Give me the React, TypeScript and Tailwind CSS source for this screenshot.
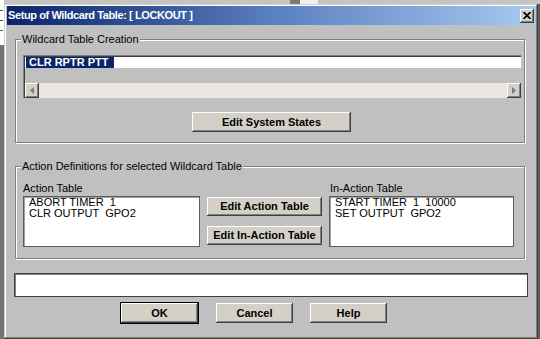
import { FC, ReactNode } from "react";

const raised = "bg-[#d4d0c8] shadow-[inset_-1px_-1px_#404040,inset_1px_1px_#ffffff,inset_-2px_-2px_#808080]";

const Btn: FC<{ label: string; className?: string; isDefault?: boolean }> = ({ label, className = "", isDefault }) => (
  <button
    className={`flex items-center justify-center ${raised} text-[11px] font-bold leading-none text-black ${
      isDefault ? "outline outline-1 outline-black" : ""
    } ${className}`}
  >
    {label}
  </button>
);

const Group: FC<{ title: string; className?: string; children: ReactNode }> = ({ title, className = "", children }) => (
  <div className={`relative border border-[#808080] shadow-[inset_1px_1px_#ffffff,1px_1px_#ffffff] ${className}`}>
    <span className="absolute -top-[8px] left-[5px] bg-[#c0c0c0] px-[1px] text-[11px] leading-[14px] text-black">
      {title}
    </span>
    {children}
  </div>
);

const ListBox: FC<{ lines: string[]; className?: string }> = ({ lines, className = "" }) => (
  <div className={`border border-[#5c5c5c] bg-white pl-[5px] shadow-[inset_1px_1px_#a0a0a0] ${className}`}>
    {lines.map((l) => (
      <div key={l} className="whitespace-pre text-[11px] leading-[11px] text-black">
        {l}
      </div>
    ))}
  </div>
);

const Arrow: FC<{ dir: "left" | "right" }> = ({ dir }) => (
  <div className={`flex w-[14px] items-center justify-center ${raised}`}>
    <svg width="4" height="7" viewBox="0 0 4 7">
      {dir === "left" ? <path d="M4 0 L0 3.5 L4 7 Z" fill="#7a7a7a" /> : <path d="M0 0 L4 3.5 L0 7 Z" fill="#7a7a7a" />}
    </svg>
  </div>
);

export default function App() {
  return (
    <div className="flex h-[339px] w-[540px] flex-col overflow-hidden bg-[#6e6e6e] font-['Liberation_Sans',Arial,sans-serif]">
      {/* strip of whatever sits behind the dialog */}
      <div className="flex h-[4px] shrink-0 bg-[#c4c4c4]">
        <div className="w-[4px] bg-white" />
        <div className="ml-[286px] w-[10px] bg-[#7a7a7a]" />
        <div className="w-[18px] bg-[#f0f0f0]" />
      </div>
      <div className="flex flex-1">
        <div className="flex w-[4px] flex-col">
          <div className="flex h-[41px] flex-col gap-[9px] bg-white pt-[6px]">
            <div className="h-[1px] w-[3px] bg-[#555]" />
            <div className="h-[1px] w-[3px] bg-[#555]" />
            <div className="h-[1px] w-[3px] bg-[#555]" />
          </div>
          <div className="flex-1 bg-[#737373]" />
        </div>

        {/* dialog window */}
        <div className="flex h-[335px] w-[534px] flex-col bg-[#c0c0c0] px-[3px] pt-[2px] shadow-[inset_-1px_-1px_#404040,inset_1px_1px_#d4d0c8,inset_-2px_-2px_#808080,inset_2px_2px_#ffffff]">
          <div className="flex h-[19px] items-center bg-linear-to-r from-[#0a246a] via-[#5a7fc0] to-[#a6caf0] pl-[1px] pr-[1px]">
            <span className="text-[11px] font-bold tracking-[-0.4px] text-white">Setup of Wildcard Table: [ LOCKOUT ]</span>
            <div className={`ml-auto flex h-[14px] w-[14px] items-center justify-center ${raised}`}>
              <svg width="8" height="7" viewBox="0 0 8 7">
                <path d="M0.5 0 L7.5 7 M7.5 0 L0.5 7" stroke="#000" strokeWidth="1.7" />
              </svg>
            </div>
          </div>

          <Group title="Wildcard Table Creation" className="ml-[8px] mt-[14px] h-[104px] w-[510px] pl-[7px] pt-[15px]">
            <div className="flex h-[43px] w-[498px] flex-col border-l border-t border-[#808080]">
              <div className="flex flex-1 flex-col border-l border-t border-[#404040]">
                <div className="flex h-[11px] bg-white">
                  <span className="ml-[1px] w-[88px] bg-[#0a246a] pl-[3px] text-[11px] font-bold leading-[11px] text-white">
                    CLR RPTR PTT
                  </span>
                </div>
                <div className="flex-1 bg-[#c0c0c0]" />
                <div className="flex h-[15px]">
                  <Arrow dir="left" />
                  <div className="flex-1 bg-[#e9e7e0]" />
                  <Arrow dir="right" />
                </div>
              </div>
            </div>
            <Btn label="Edit System States" className="ml-[169px] mt-[14px] h-[20px] w-[159px]" />
          </Group>

          <Group
            title="Action Definitions for selected Wildcard Table"
            className="ml-[8px] mt-[23px] flex h-[93px] w-[510px] items-start pl-[7px] pt-[14px]"
          >
            <div className="flex w-[177px] flex-col">
              <span className="h-[14px] text-[11px] leading-[14px] text-black">Action Table</span>
              <ListBox className="mt-[1px] h-[51px]" lines={["ABORT TIMER  1", "CLR OUTPUT  GPO2"]} />
            </div>
            <div className="ml-[7px] flex flex-col gap-[10px] pt-[16px]">
              <Btn label="Edit Action Table" className="h-[19px] w-[115px]" />
              <Btn label="Edit In-Action Table" className="h-[19px] w-[115px]" />
            </div>
            <div className="ml-[7px] flex w-[185px] flex-col">
              <span className="h-[14px] pl-[1px] text-[11px] leading-[14px] text-black">In-Action Table</span>
              <ListBox className="mt-[1px] h-[51px]" lines={["START TIMER  1  10000", "SET OUTPUT  GPO2"]} />
            </div>
          </Group>

          <div className="ml-[7px] mt-[14px] h-[24px] w-[514px] border border-[#404040] bg-white shadow-[inset_1px_1px_#808080]" />

          <div className="ml-[114px] mt-[6px] flex">
            <Btn label="OK" isDefault className="h-[20px] w-[77px]" />
            <Btn label="Cancel" className="ml-[18px] h-[20px] w-[77px]" />
            <Btn label="Help" className="ml-[17px] h-[20px] w-[77px]" />
          </div>
        </div>
        <div className="flex-1 bg-[#5e5e5e]" />
      </div>
    </div>
  );
}
